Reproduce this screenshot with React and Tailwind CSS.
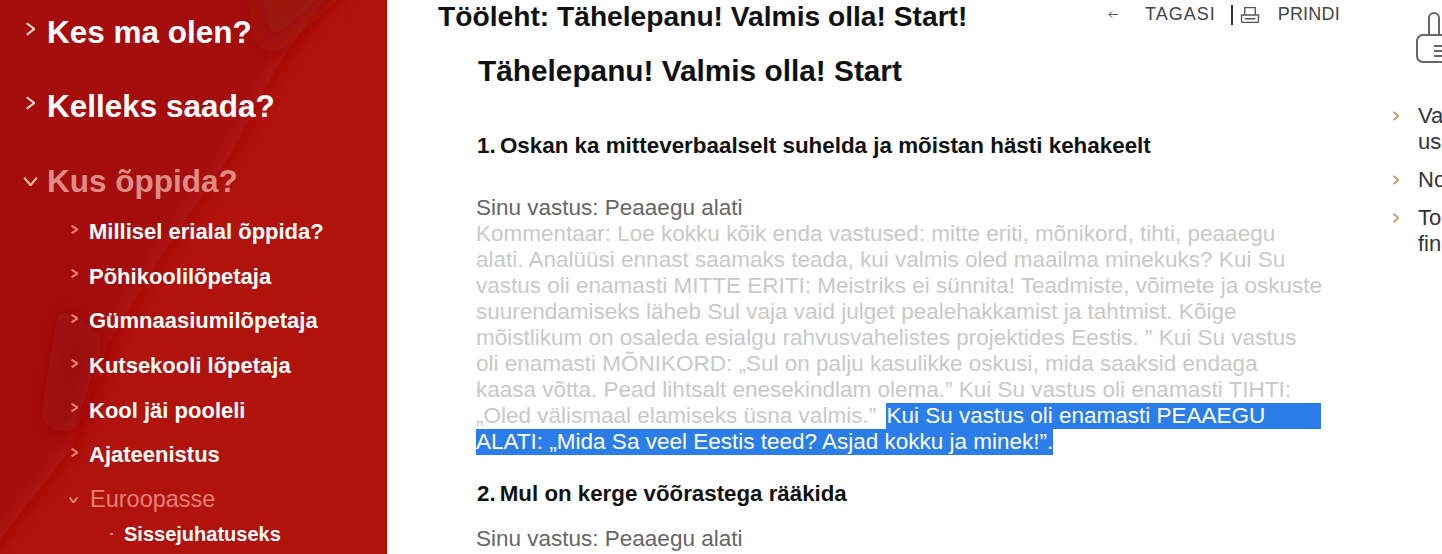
const TOP_MENU = [
  { label: "Kes ma olen?", className: "mt-[14px]" },
  { label: "Kelleks saada?", className: "mt-[38px]" },
]

const SUB_MENU = ["Millisel erialal õppida?", "Põhikoolilõpetaja", "Gümnaasiumilõpetaja", "Kutsekooli lõpetaja", "Kool jäi pooleli", "Ajateenistus"]

const COMMENT_LINES = [
  "Kommentaar: Loe kokku kõik enda vastused: mitte eriti, mõnikord, tihti, peaaegu",
  "alati. Analüüsi ennast saamaks teada, kui valmis oled maailma minekuks? Kui Su",
  "vastus oli enamasti MITTE ERITI: Meistriks ei sünnita! Teadmiste, võimete ja oskuste",
  "suurendamiseks läheb Sul vaja vaid julget pealehakkamist ja tahtmist. Kõige",
  "mõistlikum on osaleda esialgu rahvusvahelistes projektides Eestis. ” Kui Su vastus",
  "oli enamasti MÕNIKORD: „Sul on palju kasulikke oskusi, mida saaksid endaga",
  "kaasa võtta. Pead lihtsalt enesekindlam olema.” Kui Su vastus oli enamasti TIHTI:",
]

function Chevron({ down, className, strokeWidth = 2 }) {
  return (
    <svg viewBox="0 0 12 12" preserveAspectRatio="none" className={className} fill="none" stroke="currentColor" strokeWidth={strokeWidth}>
      <path d={down ? "M1 1 6 11 11 1" : "M1 1 11 6 1 11"} vectorEffect="non-scaling-stroke" />
    </svg>
  )
}

function Sidebar() {
  return (
    <aside className="relative w-[387px] h-[554px] shrink-0 overflow-hidden bg-[#b0120c] font-['Liberation_Sans',sans-serif] font-bold">
      <svg className="absolute inset-0 w-full h-full" viewBox="0 0 387 554" preserveAspectRatio="none">
        <defs>
          <filter id="soft" x="-50%" y="-50%" width="200%" height="200%">
            <feGaussianBlur stdDeviation="12" />
          </filter>
        </defs>
        <path d="M-40 -40H350L275 70 230 155 165 250 110 340 70 450 -40 590Z" fill="#a5100b" filter="url(#soft)" />
        <path d="M250 -30H360L300 25 265 55Z" fill="#9a120d" filter="url(#soft)" />
        <path d="M60 300 105 340 70 440 40 420Z" fill="#9c0f0b" filter="url(#soft)" />
      </svg>

      <div className="relative flex flex-col">
        {TOP_MENU.map(item => (
          <div key={item.label} className={`flex items-center h-[36px] ${item.className}`}>
            <Chevron className="w-[9px] h-[14px] ml-[26px] mr-[12px] -mt-[7px] text-[#ffe3d6]" />
            <span className="text-[31.5px] leading-[36px] text-white">{item.label}</span>
          </div>
        ))}

        <div className="flex items-center h-[36px] mt-[39px]">
          <Chevron down className="w-[15px] h-[9px] ml-[23px] mr-[9px] text-[#f7c0a8]" />
          <span className="text-[31.5px] leading-[36px] text-[#e08c86]">Kus õppida?</span>
        </div>

        <ul className="mt-[18px] flex flex-col gap-[15.7px]">
          {SUB_MENU.map(label => (
            <li key={label} className="flex items-center h-[29px]">
              <Chevron className="w-[7px] h-[9px] ml-[71px] mr-[11px] -mt-[5px] text-[#ff8a70]" />
              <span className="text-[22px] leading-[29px] text-white">{label}</span>
            </li>
          ))}
        </ul>

        <div className="flex items-center h-[29px] mt-[16px]">
          <Chevron down className="w-[9px] h-[6px] ml-[69px] mr-[12px] text-[#f08070]" />
          <span className="text-[23.5px] leading-[29px] font-normal text-[#e97f78]">Euroopasse</span>
        </div>
        <div className="flex items-center h-[26px] mt-[7px]">
          <span className="w-[3px] h-[2px] ml-[110px] mr-[11px] bg-[#f08070]" />
          <span className="text-[20px] leading-[26px] text-white">Sissejuhatuseks</span>
        </div>
      </div>
    </aside>
  )
}

function Toolbar() {
  return (
    <div className="flex items-start h-[33px] pl-[51px]">
      <h1 className="text-[28.2px] leading-[33px] font-bold text-[#111] w-[670px] whitespace-nowrap">Tööleht: Tähelepanu! Valmis olla! Start!</h1>
      <div className="flex items-center h-[29px] text-[18px] text-[#444]">
        <svg viewBox="0 0 12 10" className="w-[11px] h-[9px]" fill="none" stroke="currentColor" strokeWidth="1">
          <path d="M11 5H1M4.5 1.5 1 5l3.5 3.5" />
        </svg>
        <span className="ml-[26px] tracking-[1px]">TAGASI</span>
        <span className="ml-[15px] w-[2px] h-[20px] bg-[#333]" />
        <svg viewBox="0 0 18 17" className="w-[20px] h-[18px] ml-[7px]" fill="none" stroke="#555" strokeWidth="1.3">
          <path d="M4 8V1.5h10V8M1 8.5h16V14a1.5 1.5 0 0 1-1.5 1.5h-13A1.5 1.5 0 0 1 1 14ZM4 12h10" />
        </svg>
        <span className="ml-[18px] tracking-[0.2px]">PRINDI</span>
      </div>
    </div>
  )
}

function Article() {
  return (
    <div className="pl-[89px] w-[934px]">
      <h2 className="mt-[20px] ml-[2px] text-[29.8px] leading-[36px] font-bold text-[#111]">Tähelepanu! Valmis olla! Start</h2>
      <p className="mt-[42px] ml-[1px] text-[22.4px] leading-[30px] font-bold text-[#111]"><span className="mr-[-2px]">1. </span>Oskan ka mitteverbaalselt suhelda ja mõistan hästi kehakeelt</p>

      <div className="mt-[34px] text-[22.5px] leading-[26px] whitespace-nowrap">
        <p className="text-[#666]">Sinu vastus: Peaaegu alati</p>
        {COMMENT_LINES.map(line => (
          <p key={line} className="text-[#c9c9c9]">{line}</p>
        ))}
        <p className="flex text-[#c9c9c9]">
          <span className="mr-[4px]">„Oled välismaal elamiseks üsna valmis.”&nbsp;</span>
          <span className="flex-1 bg-[#2b7de9] text-white">Kui Su vastus oli enamasti PEAAEGU</span>
        </p>
        <p>
          <span className="bg-[#2b7de9] text-white inline-block">ALATI: „Mida Sa veel Eestis teed? Asjad kokku ja minek!”.</span>
        </p>
      </div>

      <p className="mt-[24px] ml-[1px] text-[22.3px] leading-[30px] font-bold text-[#111]"><span className="mr-[-2px]">2. </span>Mul on kerge võõrastega rääkida</p>
      <p className="mt-[17px] text-[22.5px] leading-[26px] text-[#666]">Sinu vastus: Peaaegu alati</p>
    </div>
  )
}

function RightColumn() {
  return (
    <div className="flex-1 overflow-hidden text-[22px] leading-[26px] text-[#333]">
      <svg viewBox="0 0 30 64" className="ml-[22px] w-[30px] h-[64px]" fill="none" stroke="#666" strokeWidth="2">
        <path d="M14 35V18a5 5 0 0 1 10 0v17M30 35H8a6 6 0 0 0-6 6v15a6 6 0 0 0 6 6h22M19 46h11M19 51h11M19 56h11" />
      </svg>
      <div className="mt-[39px] flex flex-col gap-[12px]">
        {[["Va", "us"], ["No"], ["To", "fin"]].map(lines => (
          <div key={lines[0]} className="flex">
            <Chevron strokeWidth={2} className="w-[6px] h-[10px] mt-[8px] mr-[19px] shrink-0 text-[#c9a27a]" />
            <div className="whitespace-nowrap">
              {lines.map(line => <div key={line}>{line}</div>)}
            </div>
          </div>
        ))}
      </div>
    </div>
  )
}

export default function App() {
  return (
    <div className="flex w-[1442px] h-[554px] overflow-hidden bg-white font-['Liberation_Sans',sans-serif]">
      <Sidebar />
      <main className="w-[1006px] shrink-0 overflow-hidden">
        <Toolbar />
        <Article />
      </main>
      <RightColumn />
    </div>
  )
}
